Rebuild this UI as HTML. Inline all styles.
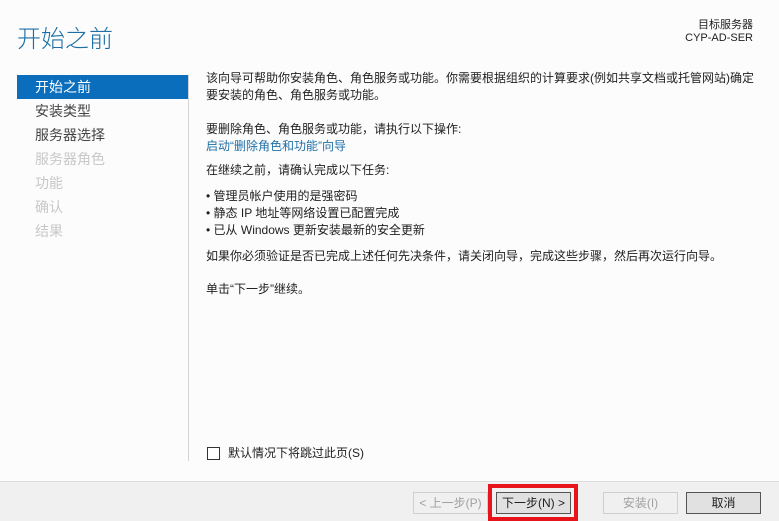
<!DOCTYPE html>
<html><head><meta charset="utf-8"><style>
*{margin:0;padding:0;box-sizing:border-box}
body{width:779px;height:521px;background:#fcfcfd;font-family:"Liberation Sans","Noto Sans CJK SC",sans-serif;font-size:12px;color:#1e1e1e;position:relative;overflow:hidden}
.a{position:absolute;white-space:nowrap}
.t{font-size:12px;line-height:17px}
.nav{position:absolute;left:35px;font-size:14px;line-height:18px}
.btn{position:absolute;top:492px;height:22px;border:1px solid #adadad;background:#e1e1e1;text-align:center;line-height:20px;font-size:12px}
</style></head><body>
<div class="a" style="left:17px;top:19px;font-size:24px;color:#1d6fa5;font-weight:300">开始之前</div>
<div class="a" style="right:26px;top:19px;font-size:11px;text-align:right;line-height:13px">目标服务器<br>CYP-AD-SER</div>
<div class="a" style="left:17px;top:75px;width:171px;height:24px;background:#0a6ebd"></div>
<div class="a" style="left:188px;top:75px;width:1px;height:386px;background:#d4d4d4"></div>
<div class="nav" style="top:78px;color:#fff">开始之前</div>
<div class="nav" style="top:102px;color:#444">安装类型</div>
<div class="nav" style="top:126px;color:#444">服务器选择</div>
<div class="nav" style="top:150px;color:#c8c8c8">服务器角色</div>
<div class="nav" style="top:174px;color:#c8c8c8">功能</div>
<div class="nav" style="top:198px;color:#c8c8c8">确认</div>
<div class="nav" style="top:222px;color:#c8c8c8">结果</div>
<div class="a t" style="left:206px;top:70px">该向导可帮助你安装角色、角色服务或功能。你需要根据组织的计算要求(例如共享文档或托管网站)确定<br>要安装的角色、角色服务或功能。</div>
<div class="a t" style="left:206px;top:121px">要删除角色、角色服务或功能，请执行以下操作:<br><span style="color:#1d6fa5">启动“删除角色和功能”向导</span></div>
<div class="a t" style="left:206px;top:162px">在继续之前，请确认完成以下任务:</div>
<div class="a t" style="left:206px;top:188px">• 管理员帐户使用的是强密码<br>• 静态 IP 地址等网络设置已配置完成<br>• 已从 Windows 更新安装最新的安全更新</div>
<div class="a t" style="left:206px;top:248px">如果你必须验证是否已完成上述任何先决条件，请关闭向导，完成这些步骤，然后再次运行向导。</div>
<div class="a t" style="left:206px;top:281px">单击“下一步”继续。</div>
<div class="a" style="left:207px;top:447px;width:13px;height:13px;border:1px solid #333;background:#fff"></div>
<div class="a t" style="left:228px;top:445px">默认情况下将跳过此页(S)</div>
<div class="a" style="left:0;top:481px;width:779px;height:40px;background:#f0f0f0;border-top:1px solid #dcdcdc"></div>
<div class="btn" style="left:413px;width:75px;color:#a0a0a0;border-color:#cfcfcf;background:#f0f0f0">&lt; 上一步(P)</div>
<div class="a" style="left:488px;top:484px;width:90px;height:37px;border:4px solid #e8141c"></div>
<div class="btn" style="left:496px;width:75px;border-color:#555">下一步(N) &gt;</div>
<div class="btn" style="left:603px;width:75px;color:#a0a0a0;border-color:#cfcfcf;background:#f0f0f0">安装(I)</div>
<div class="btn" style="left:686px;width:75px;border-color:#555">取消</div>
</body></html>
